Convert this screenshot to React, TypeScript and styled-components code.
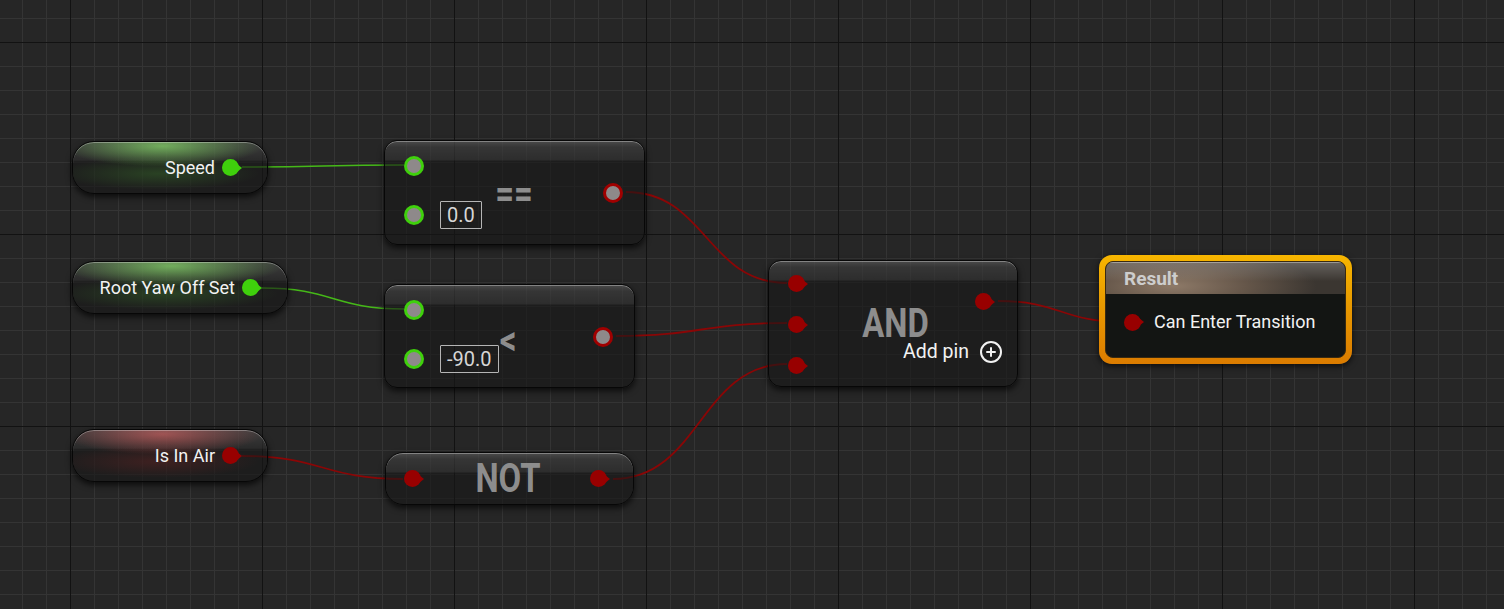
import React from "react";
import styled, { createGlobalStyle, css } from "styled-components";
import { CirclePlus } from "lucide-react";

const Global = createGlobalStyle`
  html, body { margin: 0; padding: 0; background: #262626; }
  body { font-family: Roboto, "Noto Sans", sans-serif; }
`;

const GREEN = "#3fd00c";
const GREEN_WIRE = "#45b818";
const RED = "#980000";
const RED_WIRE = "#8a0606";

const Canvas = styled.div`
  position: relative;
  width: 1504px;
  height: 609px;
  overflow: hidden;
  background-color: #262626;
  background-image:
    linear-gradient(to right, #121212 1px, transparent 1px),
    linear-gradient(to bottom, #121212 1px, transparent 1px),
    linear-gradient(to right, #343434 1px, transparent 1px),
    linear-gradient(to bottom, #343434 1px, transparent 1px);
  background-size: 192px 192px, 192px 192px, 24px 24px, 24px 24px;
  background-position: 70px 0, 0 42px, 22px 0, 0 18px;
  font-family: Roboto, "Noto Sans", sans-serif;
`;

const Wires = styled.svg`
  position: absolute;
  left: 0;
  top: 0;
  width: 1504px;
  height: 609px;
  pointer-events: none;
`;

type Place = { $x: number; $y: number; $w: number; $h: number };

const placed = css<Place>`
  position: absolute;
  left: ${(p) => p.$x}px;
  top: ${(p) => p.$y}px;
  width: ${(p) => p.$w}px;
  height: ${(p) => p.$h}px;
  box-sizing: border-box;
`;

const nodeSkin = css`
  border: 1px solid #070707;
  box-shadow: inset 0 1px 0 rgba(255, 255, 255, 0.32), 0 3px 6px rgba(0, 0, 0, 0.7);
  background-color: rgba(24, 24, 24, 0.6);
  background-image: linear-gradient(
    to bottom,
    rgba(255, 255, 255, 0.2) 0,
    rgba(255, 255, 255, 0.11) 6px,
    rgba(255, 255, 255, 0.07) 19px,
    transparent 20px
  );
`;

/* ---------- pins ---------- */

const FilledPin = styled.span<{ $color: string }>`
  position: relative;
  display: inline-block;
  flex: none;
  width: 17px;
  height: 17px;
  margin-right: 5px;
  border-radius: 50%;
  background: ${(p) => p.$color};
  &::after {
    content: "";
    position: absolute;
    left: 15px;
    top: 4.5px;
    border-left: 5px solid ${(p) => p.$color};
    border-top: 4px solid transparent;
    border-bottom: 4px solid transparent;
  }
`;

const RingPin = styled.span<{ $color: string }>`
  display: inline-block;
  flex: none;
  width: 20px;
  height: 20px;
  box-sizing: border-box;
  border-radius: 50%;
  border: 3px solid ${(p) => p.$color};
  background: #8e898a;
`;

/* ---------- variable nodes ---------- */

const VarNode = styled.div<Place & { $glow: string; $soft: string }>`
  ${placed};
  ${nodeSkin};
  border-radius: 22px;
  display: flex;
  align-items: center;
  justify-content: flex-end;
  gap: 7px;
  padding-right: 23px;
  background-image:
    linear-gradient(to bottom, rgba(255, 255, 255, 0.14) 0, rgba(255, 255, 255, 0.06) 18px, transparent 20px),
    radial-gradient(ellipse 52% 40% at 46% 8%, ${(p) => p.$glow}, transparent 100%),
    radial-gradient(ellipse 52% 32% at 44% 62%, ${(p) => p.$soft}, transparent 100%);
`;

const VarLabel = styled.span`
  color: #f2f2f2;
  font-size: 18px;
  line-height: 20px;
`;

/* ---------- function nodes ---------- */

const FuncNode = styled.div<Place>`
  ${placed};
  ${nodeSkin};
  border-radius: 13px;
  display: grid;
  grid-template-columns: auto 1fr auto;
  align-items: start;
  padding: 15px 21px 0 19px;
`;

const Inputs = styled.div<{ $gap: number; $top?: number }>`
  grid-column: 1;
  grid-row: 1 / span 2;
  display: flex;
  flex-direction: column;
  gap: ${(p) => p.$gap}px;
  padding-top: ${(p) => p.$top ?? 0}px;
`;

const PinRow = styled.div`
  display: flex;
  align-items: center;
  gap: 16px;
  height: 20px;
`;

const Literal = styled.span`
  flex: none;
  box-sizing: border-box;
  height: 28px;
  padding: 0 6px;
  border: 1px solid #b5b5b5;
  border-radius: 1px;
  color: #d6d6d6;
  font-size: 20px;
  line-height: 26px;
`;

const Output = styled.div<{ $top: number; $right?: number }>`
  grid-column: 3;
  grid-row: 1;
  justify-self: end;
  display: flex;
  padding-top: ${(p) => p.$top}px;
  margin-right: ${(p) => p.$right ?? 0}px;
`;

const Symbol = styled.div<{ $top: number }>`
  grid-column: 1 / -1;
  grid-row: 1;
  justify-self: center;
  margin-top: ${(p) => p.$top}px;
  color: #8d8d8d;
  font-weight: 700;
  font-size: 40px;
  line-height: 30px;
  transform: scaleX(0.82);
`;

/* ---------- compact NOT node ---------- */

const CompactNode = styled.div<Place>`
  ${placed};
  ${nodeSkin};
  border-radius: 18px;
  display: grid;
  grid-template-columns: auto 1fr auto;
  align-items: center;
  padding: 0 21px 0 18px;
`;

const CompactTitle = styled.div`
  text-align: center;
  color: #8d8d8d;
  font-weight: 700;
  font-size: 40px;
  line-height: 40px;
  transform: scaleX(0.82);
`;

/* ---------- AND node ---------- */

const AndNode = styled.div<Place>`
  ${placed};
  ${nodeSkin};
  border-radius: 13px;
  display: grid;
  grid-template-columns: auto 1fr auto;
  grid-template-rows: 79px auto;
  padding: 0 14px 0 19px;
`;

const AddPin = styled.div`
  grid-column: 2 / span 2;
  grid-row: 2;
  justify-self: end;
  align-self: start;
  display: flex;
  align-items: center;
  gap: 10px;
  color: #f2f2f2;
  font-size: 19.5px;
  line-height: 24px;
`;

/* ---------- Result node ---------- */

const ResultFrame = styled.div<Place>`
  ${placed};
  border-radius: 13px;
  padding: 6px;
  background: linear-gradient(to bottom, #f7b600 0%, #e89a00 45%, #db7c00 100%);
  box-shadow: 0 2px 6px rgba(0, 0, 0, 0.7);
`;

const ResultInner = styled.div`
  height: 100%;
  box-sizing: border-box;
  border-radius: 8px;
  border: 1px solid #3a2a10;
  overflow: hidden;
  background: #131513;
  display: flex;
  flex-direction: column;
`;

const ResultHeader = styled.div`
  height: 32px;
  flex: none;
  display: flex;
  align-items: center;
  padding-left: 18px;
  color: #cdcdcd;
  font-weight: 700;
  font-size: 19px;
  background:
    linear-gradient(to bottom, rgba(255, 255, 255, 0.22) 0, rgba(255, 255, 255, 0.06) 45%, transparent 60%),
    radial-gradient(ellipse 60% 110% at 28% 75%, #8e7a68 0%, #66574a 50%, #3b3631 100%);
  box-shadow: inset 0 1px 0 rgba(255, 255, 255, 0.35);
`;

const ResultRow = styled.div`
  display: flex;
  align-items: center;
  gap: 8px;
  padding: 18px 0 0 18px;
  color: #f2f2f2;
  font-size: 18px;
  line-height: 20px;
`;

function wire(x1: number, y1: number, x2: number, y2: number) {
  const d = Math.max(Math.abs(x2 - x1) * 0.5, 30);
  return `M${x1} ${y1} C ${x1 + d} ${y1}, ${x2 - d} ${y2}, ${x2} ${y2}`;
}

const wires = [
  { p: wire(242, 167, 404, 165), c: GREEN_WIRE, w: 1.6 },
  { p: wire(262, 288, 404, 309), c: GREEN_WIRE, w: 1.6 },
  { p: wire(626, 192, 787, 283), c: RED_WIRE, w: 1.8 },
  { p: wire(616, 336, 787, 323), c: RED_WIRE, w: 1.8 },
  { p: wire(242, 456, 403, 479), c: RED_WIRE, w: 1.8 },
  { p: wire(613, 479, 787, 364), c: RED_WIRE, w: 1.8 },
  { p: wire(998, 301, 1124, 322), c: RED_WIRE, w: 1.8 },
];

const greenGlow = { $glow: "rgba(110,195,80,0.8)", $soft: "rgba(70,150,50,0.3)" };
const redGlow = { $glow: "rgba(185,70,70,0.75)", $soft: "rgba(140,40,40,0.3)" };

export default function App() {
  return (
    <>
      <Global />
      <Canvas>
        <Wires viewBox="0 0 1504 609">
          {wires.map((w, i) => (
            <path key={i} d={w.p} stroke={w.c} strokeWidth={w.w} fill="none" />
          ))}
        </Wires>

        <VarNode $x={72} $y={141} $w={196} $h={53} {...greenGlow}>
          <VarLabel>Speed</VarLabel>
          <FilledPin $color={GREEN} />
        </VarNode>

        <VarNode $x={72} $y={261} $w={216} $h={53} {...greenGlow}>
          <VarLabel>Root Yaw Off Set</VarLabel>
          <FilledPin $color={GREEN} />
        </VarNode>

        <VarNode $x={72} $y={429} $w={196} $h={53} {...redGlow}>
          <VarLabel>Is In Air</VarLabel>
          <FilledPin $color={RED} />
        </VarNode>

        <FuncNode $x={384} $y={140} $w={261} $h={105}>
          <Inputs $gap={29}>
            <PinRow>
              <RingPin $color={GREEN} />
            </PinRow>
            <PinRow>
              <RingPin $color={GREEN} />
              <Literal>0.0</Literal>
            </PinRow>
          </Inputs>
          <Symbol $top={23}>==</Symbol>
          <Output $top={27}>
            <RingPin $color="#a00000" />
          </Output>
        </FuncNode>

        <FuncNode $x={384} $y={284} $w={251} $h={104}>
          <Inputs $gap={29}>
            <PinRow>
              <RingPin $color={GREEN} />
            </PinRow>
            <PinRow>
              <RingPin $color={GREEN} />
              <Literal>-90.0</Literal>
            </PinRow>
          </Inputs>
          <Symbol $top={26}>&lt;</Symbol>
          <Output $top={27}>
            <RingPin $color="#a00000" />
          </Output>
        </FuncNode>

        <CompactNode $x={385} $y={452} $w={249} $h={53}>
          <FilledPin $color={RED} />
          <CompactTitle>NOT</CompactTitle>
          <FilledPin $color={RED} />
        </CompactNode>

        <AndNode $x={768} $y={260} $w={250} $h={127}>
          <Inputs $gap={24} $top={14}>
            <FilledPin $color={RED} />
            <FilledPin $color={RED} />
            <FilledPin $color={RED} />
          </Inputs>
          <Symbol $top={48}>AND</Symbol>
          <Output $top={32} $right={6}>
            <FilledPin $color={RED} />
          </Output>
          <AddPin>
            Add pin
            <CirclePlus size={24} strokeWidth={2} color="#f2f2f2" />
          </AddPin>
        </AndNode>

        <ResultFrame $x={1099} $y={255} $w={253} $h={109}>
          <ResultInner>
            <ResultHeader>Result</ResultHeader>
            <ResultRow>
              <FilledPin $color={RED} />
              Can Enter Transition
            </ResultRow>
          </ResultInner>
        </ResultFrame>
      </Canvas>
    </>
  );
}
